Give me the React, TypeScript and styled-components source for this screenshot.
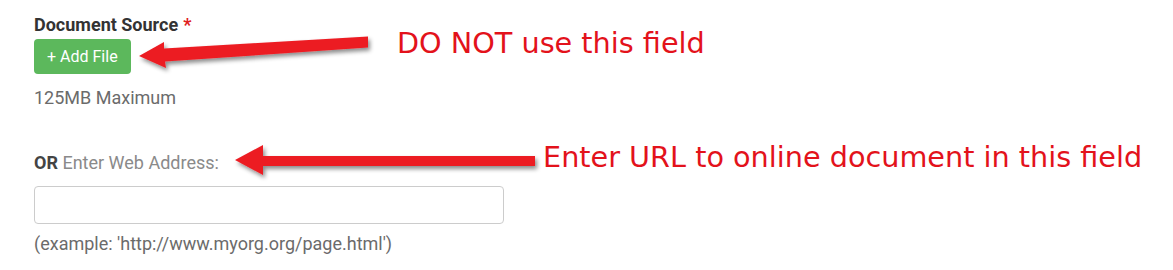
import styled, { createGlobalStyle } from "styled-components";

const GlobalStyle = createGlobalStyle`
  html, body {
    margin: 0;
    padding: 0;
    background: #ffffff;
  }
  body {
    font-family: Roboto, "Liberation Sans", Arial, sans-serif;
  }
`;

const Page = styled.div`
  position: relative;
  width: 1173px;
  height: 270px;
  overflow: hidden;
  background: #fff;
`;

const Form = styled.div`
  display: flex;
  flex-direction: column;
  align-items: flex-start;
  padding: 14px 0 0 34px;
`;

const Label = styled.label`
  font-size: 18px;
  line-height: 22px;
  font-weight: 700;
  color: #333;
`;

const Required = styled.span`
  color: #e02020;
  margin-left: 5px;
`;

const AddButton = styled.button`
  margin-top: 3px;
  height: 35px;
  padding: 0 13px;
  border: none;
  border-radius: 4px;
  background: #5cb85c;
  color: #fff;
  font-family: inherit;
  font-size: 16px;
  cursor: pointer;
`;

const Hint = styled.div<{ $gap: number }>`
  margin-top: ${({ $gap }) => $gap}px;
  font-size: 18px;
  line-height: 22px;
  color: #6b6b6b;
`;

const UrlLabel = styled.label`
  margin-top: 43px;
  font-size: 18px;
  line-height: 22px;
  color: #8a8a8a;

  b {
    color: #444;
    font-weight: 700;
  }
`;

const UrlInput = styled.input`
  margin-top: 12px;
  box-sizing: border-box;
  width: 470px;
  height: 38px;
  border: 1px solid #cccccc;
  border-radius: 4px;
  padding: 0 10px;
  font-family: inherit;
  font-size: 16px;
  outline: none;
`;

const Overlay = styled.svg`
  position: absolute;
  left: 0;
  top: 0;
  pointer-events: none;
`;

const Note = styled.div<{ $x: number; $y: number }>`
  position: absolute;
  left: ${({ $x }) => $x}px;
  top: ${({ $y }) => $y}px;
  font-family: "DejaVu Sans", sans-serif;
  font-size: 28.7px;
  line-height: 34px;
  color: #e3121b;
  white-space: nowrap;
`;

export default function App() {
  return (
    <Page>
      <GlobalStyle />
      <Form>
        <Label>
          Document Source<Required>*</Required>
        </Label>
        <AddButton>+ Add File</AddButton>
        <Hint $gap={13}>125MB Maximum</Hint>
        <UrlLabel>
          <b>OR</b> Enter Web Address:
        </UrlLabel>
        <UrlInput type="text" />
        <Hint $gap={9}>(example: 'http://www.myorg.org/page.html')</Hint>
      </Form>

      <Overlay width="1173" height="270" viewBox="0 0 1173 270">
        <defs>
          <filter id="shadow" x="-10%" y="-50%" width="120%" height="200%">
            <feDropShadow dx="2" dy="3" stdDeviation="2" floodColor="#000" floodOpacity="0.45" />
          </filter>
        </defs>
        <polygon
          filter="url(#shadow)"
          fill="#ec1c24"
          points="139,56 164,42 164,48.5 368,36.5 368,47.5 165,61.5 166,68"
        />
        <polygon
          filter="url(#shadow)"
          fill="#ec1c24"
          points="235,160 263,145 263,156 535,156 535,166 263,166 263,175"
        />
      </Overlay>
      <Note $x={397} $y={26}>DO NOT use this field</Note>
      <Note $x={543} $y={140}>Enter URL to online document in this field</Note>
    </Page>
  );
}
